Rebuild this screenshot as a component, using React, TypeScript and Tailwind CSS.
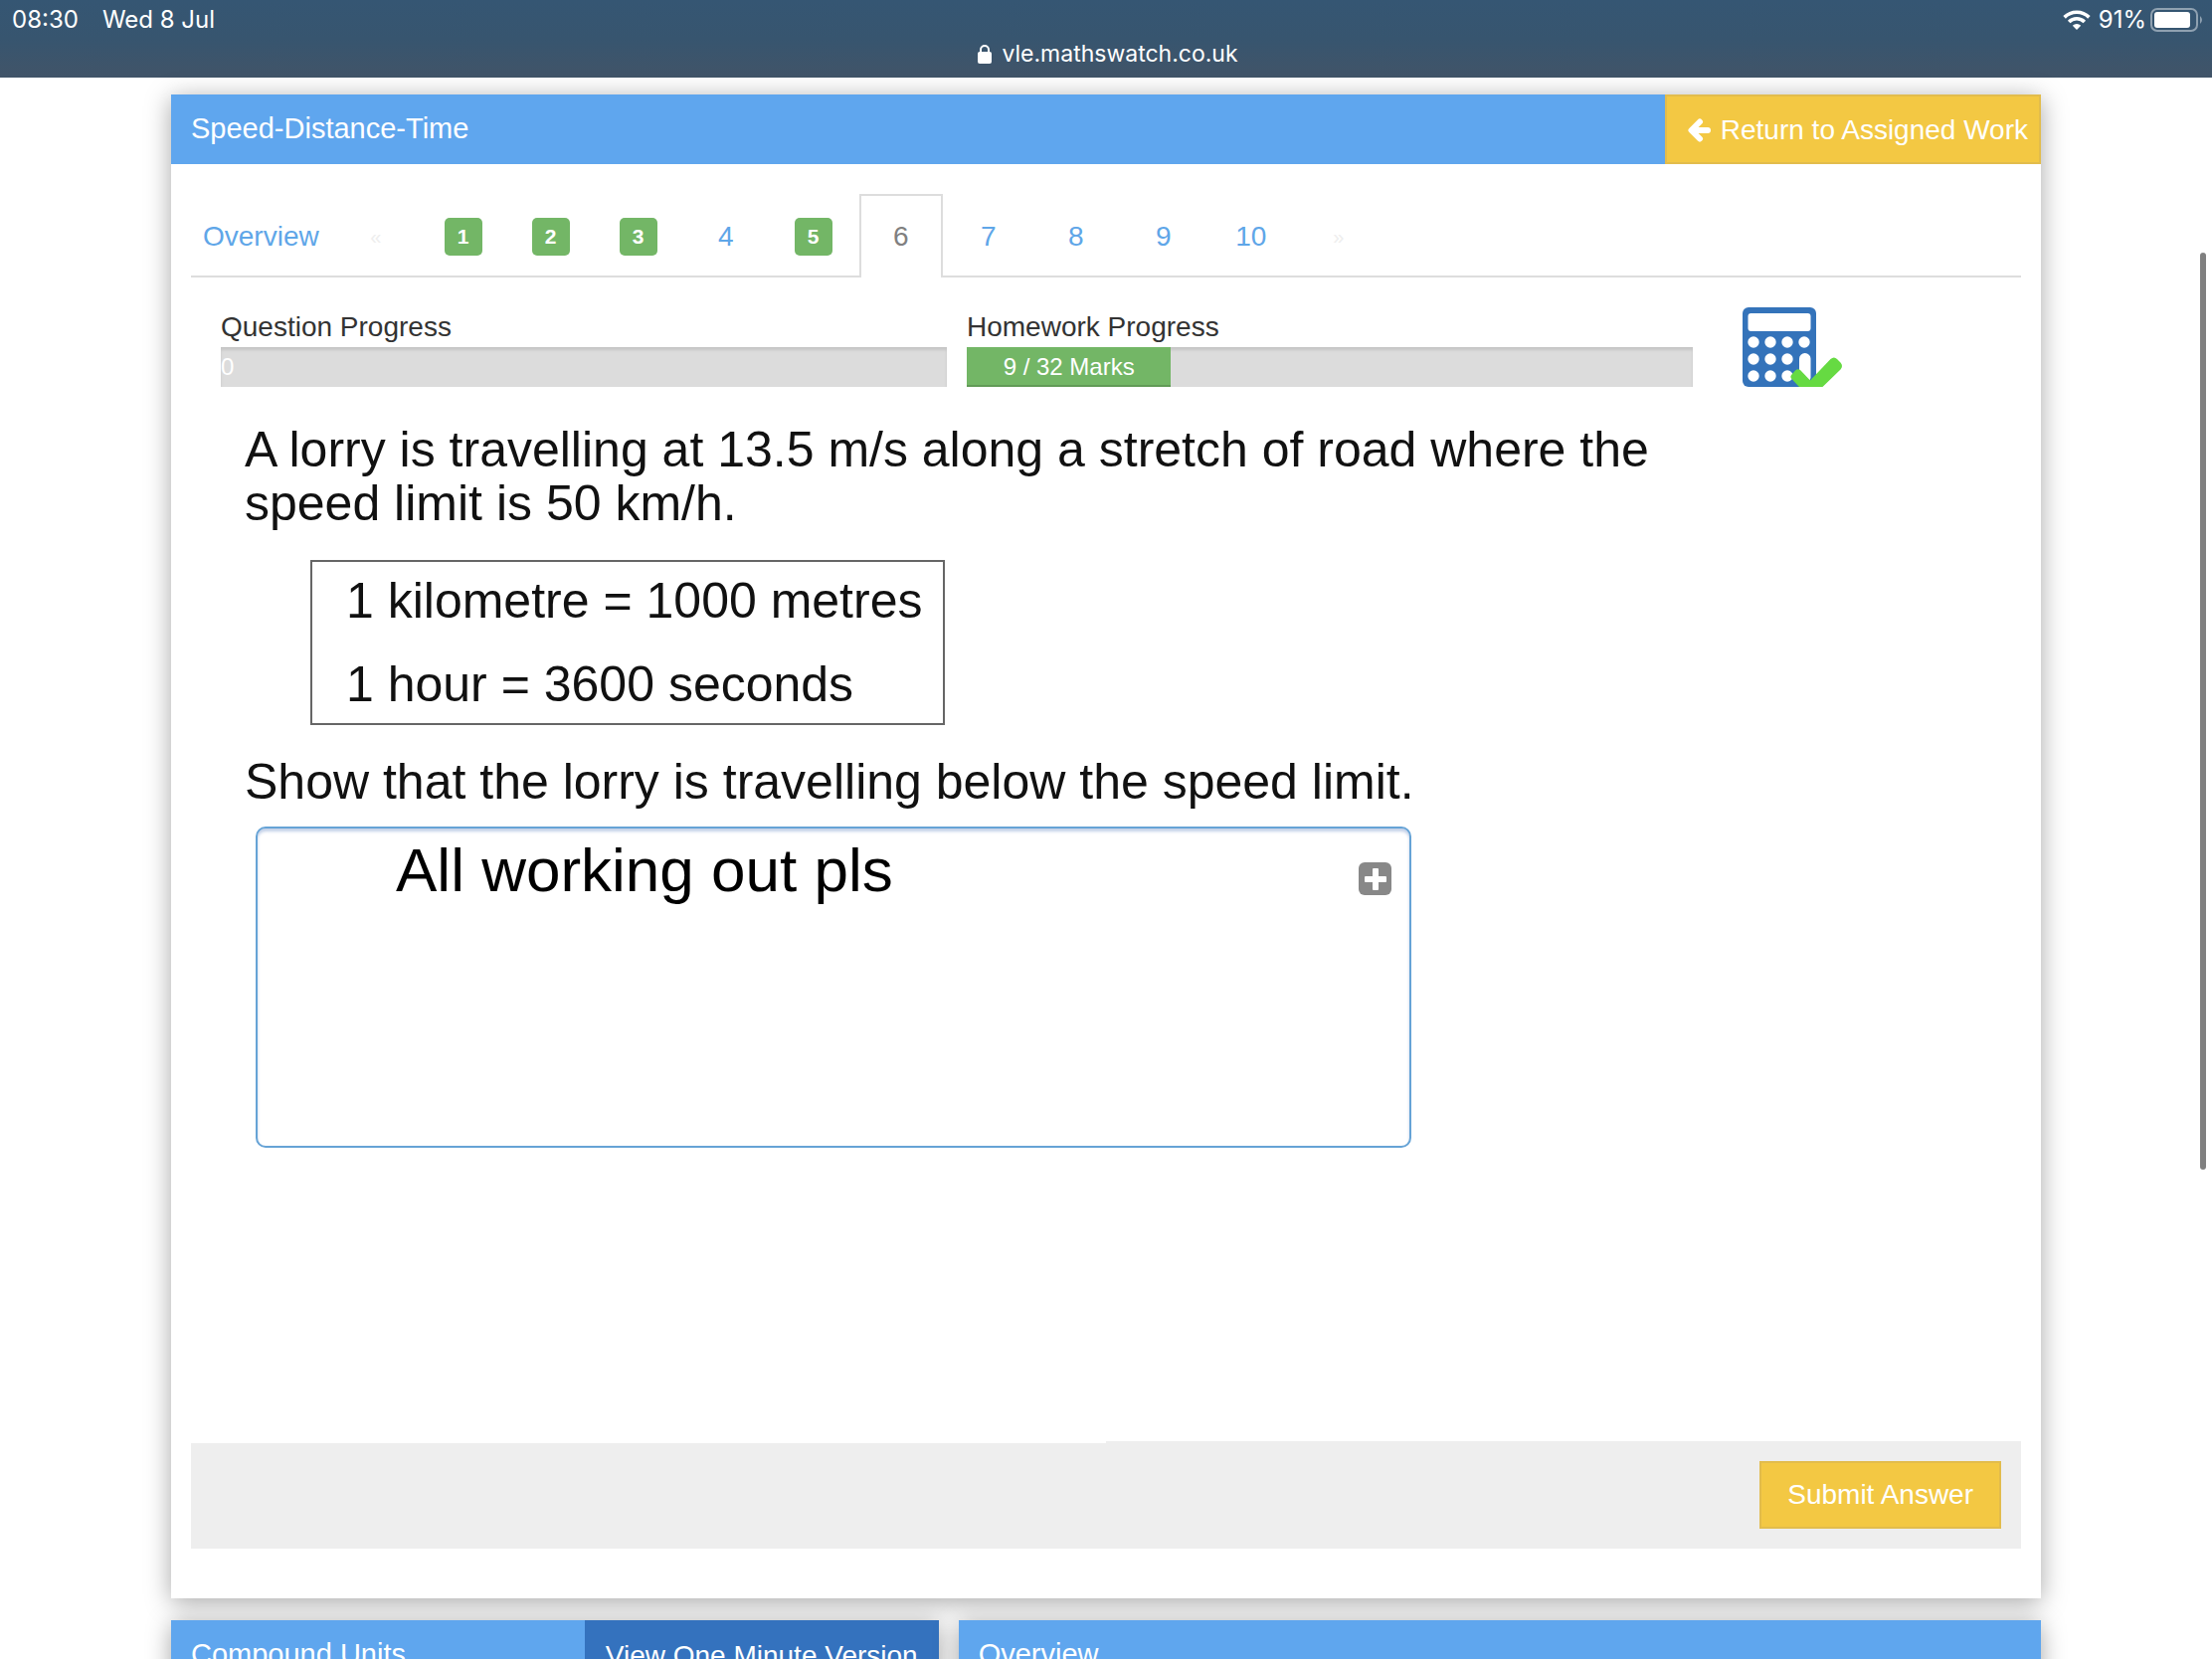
import { useState } from "react";

type Tab = {
  label: string;
  state: "done" | "open" | "active";
};

const tabs: Tab[] = [
  { label: "1", state: "done" },
  { label: "2", state: "done" },
  { label: "3", state: "done" },
  { label: "4", state: "open" },
  { label: "5", state: "done" },
  { label: "6", state: "active" },
  { label: "7", state: "open" },
  { label: "8", state: "open" },
  { label: "9", state: "open" },
  { label: "10", state: "open" },
];

// calculator keys, the tall one is drawn separately
const keys = [
  [11, 35], [28, 35], [45, 35], [62, 35],
  [11, 52], [28, 52], [45, 52],
  [11, 69], [28, 69], [45, 69],
];

function StatusBar() {
  return (
    <header className="h-[78px] bg-gradient-to-b from-[#355673] via-[#37556f] to-[#415468] pr-2 pl-3 font-['Inter',sans-serif] text-white">
      <div className="flex h-10 items-center justify-between text-2xl">
        <div className="flex gap-6">
          <span>08:30</span>
          <span>Wed 8 Jul</span>
        </div>
        <div className="flex items-center">
          <svg viewBox="0 0 28 20" className="mr-2 h-5 w-7" fill="none" stroke="currentColor" strokeWidth="3.6">
            <path d="M1.6 7.4a17.6 17.6 0 0 1 24.8 0" />
            <path d="M6.2 12a11 11 0 0 1 15.6 0" />
            <path d="M14 20l-4.2-4.3a6 6 0 0 1 8.4 0z" fill="currentColor" stroke="none" />
          </svg>
          <span>91%</span>
          <svg viewBox="0 0 54 24" className="ml-1 h-6 w-[54px]">
            <rect x="1" y="1" width="46" height="22" rx="6" fill="none" stroke="#8fa1b1" strokeWidth="2" />
            <rect x="4" y="4" width="36" height="16" rx="3" fill="#fff" />
            <path d="M50 8q4 4 0 8z" fill="#8fa1b1" />
          </svg>
        </div>
      </div>
      <div className="flex h-7 items-center justify-center gap-2.5 text-[23px]">
        <svg viewBox="0 0 14 20" className="h-5 w-3.5" fill="currentColor">
          <rect x="0" y="8" width="14" height="12" rx="2" />
          <path d="M3 9V6a4 4 0 0 1 8 0v3" fill="none" stroke="currentColor" strokeWidth="2" />
        </svg>
        <span>vle.mathswatch.co.uk</span>
      </div>
    </header>
  );
}

function TabStrip() {
  return (
    <nav className="flex h-[84px] gap-1 border-b-2 border-[#dddddd]">
      <a href="#overview" className="pr-[11px] pl-3 leading-[86px] text-[#5fa6e8]">
        Overview
      </a>
      <span className="w-[84px] text-center text-xl leading-[86px] text-[#eeeeee]">«</span>
      {tabs.map((tab) =>
        tab.state === "active" ? (
          <a
            key={tab.label}
            href={`#q${tab.label}`}
            aria-current="page"
            className="-mb-0.5 w-[84px] border-2 border-b-0 border-[#dddddd] bg-white text-center leading-[82px] text-[#808080]"
          >
            {tab.label}
          </a>
        ) : (
          <a
            key={tab.label}
            href={`#q${tab.label}`}
            className="flex w-[84px] items-center justify-center pt-1 text-[#5fa6e8]"
          >
            {tab.state === "done" ? (
              <span className="size-[38px] rounded-[5px] bg-[#73b666] text-center text-[21px] leading-[38px] font-bold text-white">
                {tab.label}
              </span>
            ) : (
              tab.label
            )}
          </a>
        ),
      )}
      <span className="w-[84px] text-center text-xl leading-[86px] text-[#eeeeee]">»</span>
    </nav>
  );
}

function Progress({
  label,
  text,
  percent,
}: {
  label: string;
  text: string;
  percent: number;
}) {
  return (
    <div className="col-span-5">
      <div className="leading-10 text-[#333333]">{label}</div>
      <div className="h-10 bg-[#dcdcdc] text-2xl leading-10 text-white shadow-[inset_0_3px_3px_rgba(0,0,0,0.1)]">
        {percent > 0 ? (
          <div
            className="bg-[#73b666] text-center shadow-[inset_0_-2px_0_rgba(0,0,0,0.15)]"
            style={{ width: `${percent}%` }}
          >
            {text}
          </div>
        ) : (
          text
        )}
      </div>
    </div>
  );
}

function CalculatorIcon() {
  return (
    <svg viewBox="0 0 101 80" className="h-20 w-[101px]">
      <rect width="74" height="80" rx="6" fill="#3473ba" />
      <rect x="5.5" y="6" width="63" height="18" rx="3" fill="#fff" />
      {keys.map(([x, y]) => (
        <circle key={`${x}-${y}`} cx={x} cy={y} r="5.7" fill="#fff" />
      ))}
      <rect x="57" y="46" width="11.5" height="30" rx="5.7" fill="#fff" />
      <path
        d="M49.500 67.500L53 63.500q3-2.500 5.500 0L68 73.500L88.500 52q3.500-3 6.500 0l3.500 3.500q3 3.500 0 7L81 79.500q-1.500 1.500-4 1.500H60q-2 0-3.500-1.500L49 71.500q-1.500-2 .500-4z"
        fill="#66da42"
      />
    </svg>
  );
}

export default function App() {
  const [answer, setAnswer] = useState("All working out pls");

  return (
    <div className="relative h-screen overflow-hidden bg-white font-['Liberation_Sans',Arial,sans-serif] text-[28px]">
      <StatusBar />

      <main className="mx-auto mt-[17px] flex max-w-[1880px] flex-col gap-[22px]">
        <section className="bg-white shadow-[0_4px_24px_rgba(0,0,0,0.35)]">
          <div className="flex h-[70px] justify-between bg-[#5fa6ee] text-white">
            <h1 className="pl-5 text-[29px] leading-[68px]">Speed-Distance-Time</h1>
            <a
              href="#assigned"
              className="flex items-center border-2 border-[#e2bc4c] bg-[#f3c843] pt-0.5 pr-[11px] pl-5"
            >
              <svg viewBox="0 0 24 24" className="mr-2.5 size-6" fill="none" stroke="currentColor" strokeWidth="6">
                <path d="M13 3.500L4.500 12l8.500 8.500" strokeLinecap="round" strokeLinejoin="round" />
                <path d="M6 12h15" strokeLinecap="round" />
              </svg>
              Return to Assigned Work
            </a>
          </div>

          <div className="px-5 pt-[30px] pb-[50px]">
            <TabStrip />

            <div className="grid grid-cols-12 items-end gap-5 px-[30px] pt-[30px]">
              <Progress label="Question Progress" text="0" percent={0} />
              <Progress label="Homework Progress" text="9 / 32 Marks" percent={(9 / 32) * 100} />
              <div className="col-span-2 pl-[30px]">
                <CalculatorIcon />
              </div>
            </div>

            <div className="px-[54px] pt-9 text-[50px] leading-[54px] text-[#111111]">
              <p>
                A lorry is travelling at 13.5 m/s along a stretch of road where the
                <br />
                speed limit is 50 km/h.
              </p>
              <div className="my-[30px] ml-[66px] flex w-[638px] flex-col gap-[30px] border-2 border-[#666666] py-3 pl-[34px]">
                <p>1 kilometre = 1000 metres</p>
                <p>1 hour = 3600 seconds</p>
              </div>
              <label htmlFor="answer">Show that the lorry is travelling below the speed limit.</label>
            </div>

            <div className="relative mt-[18px] ml-[65px] max-w-[1162px]">
              <textarea
                id="answer"
                value={answer}
                onChange={(e) => setAnswer(e.target.value)}
                className="block h-[323px] w-full resize-none rounded-[10px] border-2 border-[#66a3d6] bg-white py-1.5 pr-20 pl-[139px] text-[62px] leading-[72px] text-black shadow-[inset_0_3px_3px_rgba(80,120,190,0.35)] outline-none"
              />
              <button
                type="button"
                aria-label="Add"
                className="absolute top-9 right-5 flex size-[33px] items-center justify-center rounded-md bg-[#888888]"
              >
                <svg viewBox="0 0 22 22" className="size-[22px]" fill="#fff">
                  <rect x="8" width="6" height="22" rx="1" />
                  <rect y="8" width="22" height="6" rx="1" />
                </svg>
              </button>
            </div>

            <div className="mt-[295px] bg-[#eeeeee]">
              <div className="h-0.5 w-1/2 bg-white" />
              <div className="flex justify-end px-5 pt-[18px] pb-5">
                <button
                  type="button"
                  className="h-[68px] border-2 border-[#e2bc4c] bg-[#f3c843] px-[26px] text-white"
                >
                  Submit Answer
                </button>
              </div>
            </div>
          </div>
        </section>

        <div className="grid grid-cols-12 gap-5">
          <section className="col-span-5 flex h-[70px] justify-between bg-[#5fa6ee] text-white shadow-[0_4px_24px_rgba(0,0,0,0.35)]">
            <h2 className="pl-5 text-[29px] leading-[68px]">Compound Units</h2>
            <button type="button" className="bg-[#3472be] px-[21px] pt-0.5">
              View One Minute Version
            </button>
          </section>
          <section className="col-span-7 h-[70px] bg-[#5fa6ee] text-white shadow-[0_4px_24px_rgba(0,0,0,0.35)]">
            <h2 className="pl-5 text-[29px] leading-[68px]">Overview</h2>
          </section>
        </div>
      </main>

      {/* scroll thumb */}
      <div className="absolute top-[254px] right-1.5 h-[922px] w-1.5 rounded-full bg-[#808080]" />
    </div>
  );
}
